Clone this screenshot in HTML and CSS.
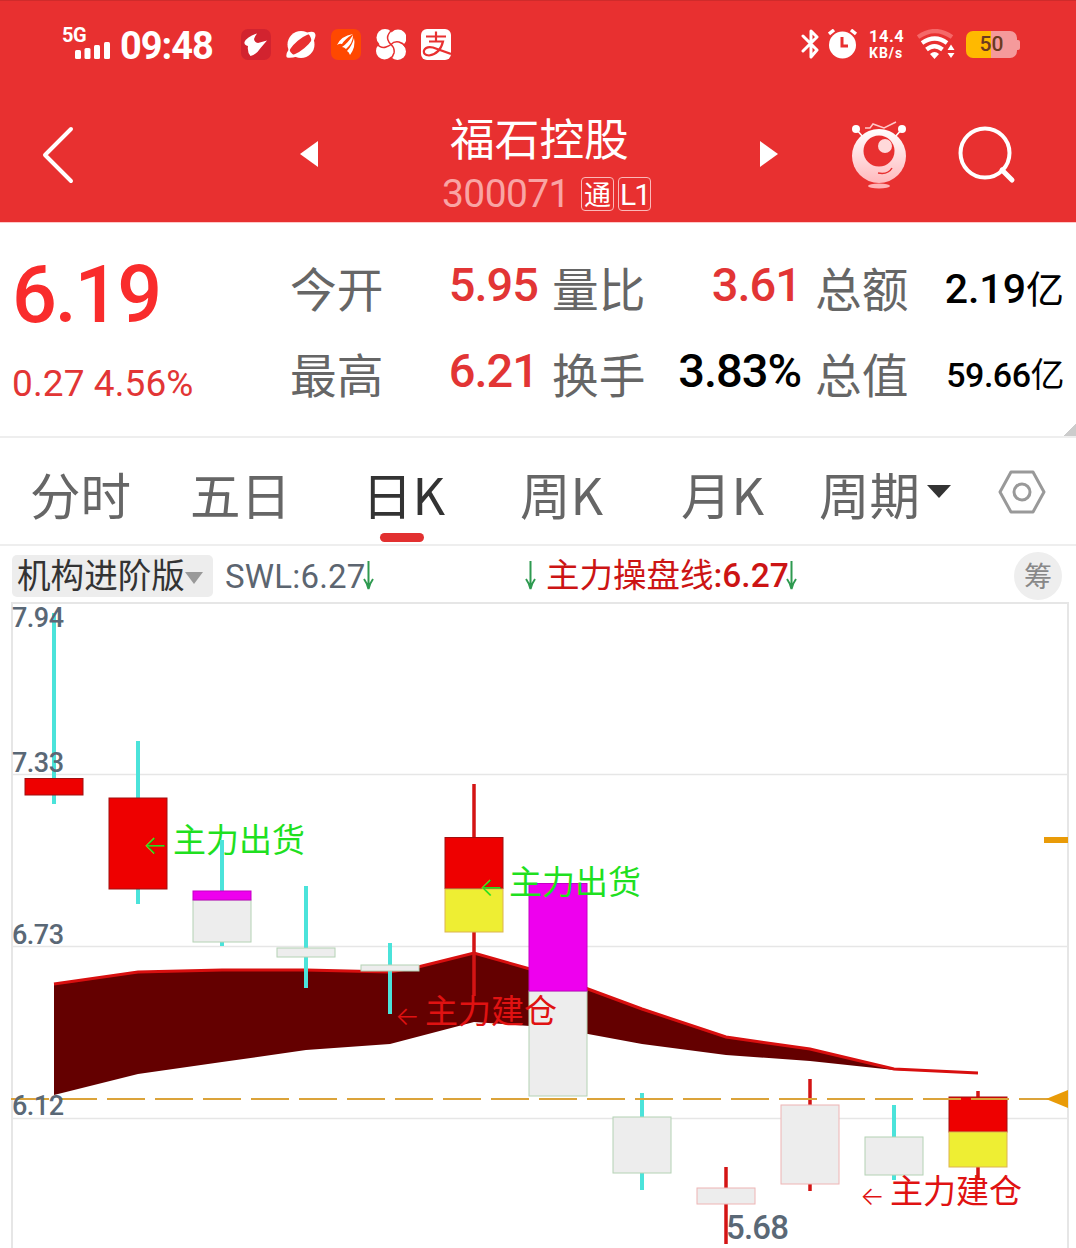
FILE: index.html
```html
<!DOCTYPE html>
<html lang="zh-CN">
<head>
    <meta charset="UTF-8">
    <meta name="viewport" content="width=device-width, initial-scale=1.0">
    <title>福石控股 300071</title>
    <link rel="stylesheet" href="styles.css">
</head>
<body>
    <header class="header">
        <div class="status-bar">
            <div class="status-left">
                <div class="signal">
                    <span class="network">5G</span>
                    <svg class="bars" width="36" height="17" viewBox="0 0 36 17" fill="#fff">
                        <rect x="0" y="8" width="6" height="9" rx="1.5"/>
                        <rect x="9.5" y="6" width="6" height="11" rx="1.5"/>
                        <rect x="19" y="3" width="6" height="14" rx="1.5"/>
                        <rect x="29" y="0" width="6" height="17" rx="1.5"/>
                    </svg>
                </div>
                <span class="time">09:48</span>
                <div class="app-icons">
                    <svg width="30" height="31" viewBox="0 0 30 31">
                        <rect width="30" height="31" rx="7" fill="#d2232f"/>
                        <path d="M16 4.500Q6 8 3.500 13Q3 16 7 17Q6 23 9.500 27Q15 26 20 18.500L26 11.500L17 14Q13 13 13 10Q14 7 16 4.500Z" fill="#fff"/>
                    </svg>
                    <svg width="30" height="31" viewBox="0 0 30 31">
                        <circle cx="15" cy="15.500" r="13.500" fill="#fff"/>
                        <ellipse cx="15" cy="15.500" rx="15" ry="5" transform="rotate(-40 15 15.500)" fill="#e83030"/>
                        <path d="M21 3.500Q29 1 29.500 6Q29.500 10 25 16Q27 9 21 3.500ZM3 20Q-1 26 1 28.500Q5 29.500 11 27.500Q5 25.500 3 20Z" fill="#fff"/>
                    </svg>
                    <svg width="30" height="31" viewBox="0 0 30 31">
                        <rect width="30" height="31" rx="7" fill="#ff4800"/>
                        <g fill="#fff">
                            <path d="M6 16Q10 7 22 5Q14 10 11 15Q9 14 6 16Z"/>
                            <path d="M11 18Q17 14 22 6Q22 14 15 20Q13 18 11 18Z"/>
                            <path d="M16 22Q21 17 23 9Q25 18 19 26Q18 23 16 22Z"/>
                        </g>
                    </svg>
                    <svg width="30" height="31" viewBox="0 0 30 31">
                        <g fill="#fff">
                            <circle cx="9" cy="8.500" r="8.500"/>
                            <circle cx="22" cy="9" r="8.500"/>
                            <circle cx="8.500" cy="22" r="8.500"/>
                            <circle cx="21.500" cy="22.500" r="8.500"/>
                            <rect x="10" y="10" width="10" height="11"/>
                        </g>
                        <path d="M17 0Q10 6 12 11Q13 14 15 15.500Q19 19 18 24Q17 28 13 31M0 14Q5 20 10 18Q13 17 15 15.500Q18 12 23 13Q27 14 30 18" fill="none" stroke="#e83030" stroke-width="1.5"/>
                    </svg>
                    <svg width="30" height="31" viewBox="0 0 30 31">
                        <rect width="30" height="31" rx="6" fill="#fff"/>
                        <path d="M5 7.500H25M15 2.500V12M8 12.500H22Q19 25 8 26.500Q2 26 3 21.500Q5 17 12 18.500L30 25" fill="none" stroke="#e83030" stroke-width="2.200"/>
                    </svg>
                </div>
            </div>
            <div class="status-right">
                <svg width="20" height="31" viewBox="0 0 20 31" fill="none" stroke="#fff" stroke-width="3" stroke-linejoin="round" stroke-linecap="round">
                    <path d="M2 7L16 21L10 28V2L16 8L2 22"/>
                </svg>
                <svg class="alarm" width="31" height="31" viewBox="0 0 31 31">
                    <circle cx="14.500" cy="16" r="13.500" fill="#fff"/>
                    <path d="M1 5L6 1M23 1L28 5" stroke="#fff" stroke-width="3.500"/>
                    <path d="M14 8V17H20" fill="none" stroke="#e83030" stroke-width="3"/>
                </svg>
                <div class="net-speed"><span>14.4</span><span>KB/s</span></div>
                <svg class="wifi" width="39" height="31" viewBox="0 0 39 31">
                    <g fill="none" stroke="#fff" stroke-width="4.200">
                        <path d="M1 8Q18 -4 35 8" stroke="#f56868"/>
                        <path d="M5 14Q18 5 30 14"/>
                        <path d="M9.500 20.500Q17.500 14 25.500 20.500"/>
                    </g>
                    <path d="M13 25Q17.500 21 22 25L17.500 30Z" fill="#fff"/>
                    <path d="M30.500 21L34 15.500L37.500 21ZM30.500 24H37.500L34 29Z" fill="#fff"/>
                </svg>
                <div class="battery"><span>50</span></div>
            </div>
        </div>
        <div class="nav-bar">
            <svg class="back" width="32" height="58" viewBox="0 0 32 58" fill="none" stroke="#fff" stroke-width="4" stroke-linecap="round" stroke-linejoin="round">
                <path d="M29 3L3 29L29 55"/>
            </svg>
            <svg class="prev" width="19" height="28" viewBox="0 0 19 28"><path d="M0 14L18 1V27Z" fill="#fff"/></svg>
            <div class="stock-title">
                <h1>福石控股</h1>
                <div class="stock-code">
                    <span class="code">300071</span>
                    <span class="badge">通</span>
                    <span class="badge badge-l1">L1</span>
                </div>
            </div>
            <svg class="next" width="19" height="28" viewBox="0 0 19 28"><path d="M0 1L18 14L0 27Z" fill="#fff"/></svg>
            <svg class="robot" width="56" height="70" viewBox="0 0 56 70">
                <defs>
                    <linearGradient id="face" x1="0" y1="0" x2="0" y2="1">
                        <stop offset="0" stop-color="#fff"/>
                        <stop offset="1" stop-color="#ffb9bd"/>
                    </linearGradient>
                </defs>
                <path d="M5 8L12 16M51 8L44 16" stroke="#fff" stroke-width="1.500"/>
                <path d="M14 7H19L22 3L33 7L45 1" fill="none" stroke="#ffc8c8" stroke-width="1.500"/>
                <circle cx="5" cy="8" r="4" fill="#fff"/>
                <circle cx="51" cy="8" r="4" fill="#fff"/>
                <circle cx="28" cy="35" r="27" fill="url(#face)"/>
                <circle cx="28" cy="30" r="15.500" fill="#e83030"/>
                <circle cx="34" cy="25" r="7" fill="#ffd9da"/>
                <path d="M27 52Q37 54 41 47" fill="none" stroke="#e83030" stroke-width="1.500"/>
                <ellipse cx="28" cy="65" rx="11" ry="2.500" fill="#ffb3b6"/>
            </svg>
            <svg class="search" width="58" height="60" viewBox="0 0 58 60" fill="none" stroke="#fff" stroke-width="4" stroke-linecap="round">
                <circle cx="27" cy="27" r="24.500"/>
                <path d="M44 44L54 54" stroke-width="5"/>
            </svg>
        </div>
    </header>

    <section class="quote">
        <div class="quote-price">
            <div class="price">6.19</div>
            <div class="change">0.27 4.56%</div>
        </div>
        <div class="quote-grid">
            <span class="label first">今开</span>
            <span class="value up">5.95</span>
            <span class="label">量比</span>
            <span class="value up">3.61</span>
            <span class="label">总额</span>
            <span class="value amount">2.19<b>亿</b></span>
            <span class="label first">最高</span>
            <span class="value up">6.21</span>
            <span class="label">换手</span>
            <span class="value percent">3.83%</span>
            <span class="label">总值</span>
            <span class="value cap">59.66<b>亿</b></span>
        </div>
    </section>

    <nav class="tabs">
        <span class="tab">分时</span>
        <span class="tab">五日</span>
        <span class="tab active">日K</span>
        <span class="tab">周K</span>
        <span class="tab">月K</span>
        <span class="tab period">周期</span>
        <svg class="caret" width="24" height="13" viewBox="0 0 24 13"><path d="M0 0H24L12 13Z" fill="#333"/></svg>
        <svg class="settings" width="48" height="44" viewBox="0 0 48 44" fill="none" stroke="#999" stroke-width="3" stroke-linejoin="round">
            <path d="M13 2H35L46 22L35 42H13L2 22Z"/>
            <circle cx="24" cy="22" r="8"/>
        </svg>
    </nav>

    <div class="indicator">
        <div class="indicator-name">
            <span>机构进阶版</span>
            <svg width="18" height="12" viewBox="0 0 18 12"><path d="M0 0H18L9 12Z" fill="#999"/></svg>
        </div>
        <span class="swl">SWL:6.27</span>
        <svg class="down" width="11" height="30" viewBox="0 0 11 30"><path d="M5.500 0V28M1 18Q4 22 5.500 28Q7 22 10 18"/></svg>
        <svg class="down down-main" width="11" height="30" viewBox="0 0 11 30"><path d="M5.500 0V28M1 18Q4 22 5.500 28Q7 22 10 18"/></svg>
        <span class="main-line">主力操盘线<b>:6.27</b></span>
        <svg class="down" width="11" height="30" viewBox="0 0 11 30"><path d="M5.500 0V28M1 18Q4 22 5.500 28Q7 22 10 18"/></svg>
        <span class="chip">筹</span>
    </div>

    <svg class="chart" width="1076" height="646" viewBox="0 602 1076 646">
        <!-- grid -->
        <g class="grid">
            <path d="M12 1248V603H1068V1248" stroke-width="2"/>
            <path d="M12 774.500H1068M12 946.500H1068M12 1118.500H1068"/>
        </g>

        <g class="signal-sell">
            <text x="173" y="852" textLength="132">主力出货</text>
        </g>

        <!-- band -->
        <path class="band" d="M54 984L138 972L222 970L306 970L390 972L418 967L474 953L530 969L588 989L642 1009L726 1037L810 1049L894 1069L978 1073L894 1070L810 1061L726 1055L642 1044L588 1034L530 1026L474 1022L390 1044L306 1050L222 1062L138 1074L54 1095Z"/>
        <path class="band-line" d="M54 984L138 972L222 970L306 970L390 972L418 967L474 953L530 969L588 989L642 1009L726 1037L810 1049L894 1069L978 1073"/>

        <!-- wicks -->
        <g class="wick-down">
            <path d="M54 613V804M138 741V904M222 840V946M306 886V988M390 943V1014M642 1093V1190M894 1105V1180"/>
        </g>
        <g class="wick-up">
            <path d="M474 784V996M726 1167V1244M810 1079V1191M978 1091V1180"/>
        </g>

        <!-- candles -->
        <g class="flat flat-down">
            <rect x="193" y="900" width="58" height="42"/>
            <rect x="277" y="948" width="58" height="9"/>
            <rect x="361" y="965" width="58" height="6"/>
            <rect x="529" y="991" width="58" height="105"/>
            <rect x="613" y="1117" width="58" height="56"/>
            <rect x="865" y="1137" width="58" height="38"/>
        </g>
        <g class="flat flat-up">
            <rect x="697" y="1188" width="58" height="16"/>
            <rect x="781" y="1105" width="58" height="79"/>
        </g>
        <g class="red">
            <rect x="25" y="778.500" width="58" height="16.500"/>
            <rect x="109" y="798" width="58" height="91"/>
            <rect x="445" y="837.500" width="58" height="51"/>
            <rect x="949" y="1097" width="58" height="35"/>
        </g>
        <g class="yellow">
            <rect x="445" y="889" width="58" height="43"/>
            <rect x="949" y="1132" width="58" height="35"/>
        </g>
        <g class="magenta">
            <rect x="193" y="891" width="58" height="9"/>
            <rect x="529" y="883.500" width="58" height="107.500"/>
        </g>

        <!-- last price -->
        <path class="last-price" d="M11 1099H1050"/>
        <path d="M1046 1099L1068 1090V1108Z" fill="#e99b08"/>
        <rect x="1044" y="837" width="24" height="6" fill="#e99b08"/>

        <g class="signal-sell">
            <text class="arrow" x="143" y="854">←</text>
            <text class="arrow" x="479" y="896">←</text>
            <text x="509" y="894" textLength="132">主力出货</text>
        </g>
        <g class="signal-buy">
            <text class="arrow" x="395" y="1025">←</text>
            <text x="425" y="1023" textLength="132">主力建仓</text>
            <text class="arrow" x="860" y="1205">←</text>
            <text x="890" y="1203" textLength="132">主力建仓</text>
        </g>

        <g class="axis">
            <text x="12" y="627" textLength="52">7.94</text>
            <text x="12" y="772" textLength="52">7.33</text>
            <text x="12" y="944" textLength="52">6.73</text>
            <text x="12" y="1115" textLength="52">6.12</text>
            <text class="low" x="726" y="1239" textLength="63">5.68</text>
        </g>
    </svg>
</body>
</html>
```

FILE: styles.css
```css
* {
    margin: 0;
    padding: 0;
    box-sizing: border-box;
}

body {
    width: 1076px;
    height: 1248px;
    overflow: hidden;
    background: #fff;
    font-family: 'Roboto', 'Noto Sans CJK SC', sans-serif;
    white-space: nowrap;
}

svg {
    display: block;
    flex-shrink: 0;
}

.header {
    height: 222px;
    background: #e83030;
    border-top: 1px solid #cf2b2b;
    color: #fff;
}

.status-bar {
    display: flex;
    justify-content: space-between;
    height: 87px;
    padding: 0 56px 0 62px;
}

.status-left,
.status-right {
    display: flex;
    align-items: center;
}

.signal {
    width: 49px;
    height: 33px;
    margin-right: 9px;
}

.network {
    display: block;
    height: 17px;
    font-size: 20px;
    font-weight: 700;
    line-height: 15px;
    letter-spacing: -0.5px;
}

.bars {
    margin-left: 13px;
    margin-top: -3px;
}

.time {
    width: 121px;
    font-size: 38px;
    font-weight: 700;
    letter-spacing: -1px;
    line-height: 44px;
    margin-top: 2px;
}

.app-icons {
    display: flex;
    gap: 15px;
}

.alarm {
    margin-left: 7px;
    margin-right: 10px;
}

.net-speed {
    display: flex;
    flex-direction: column;
    width: 36px;
    font-size: 16.5px;
    font-weight: 700;
}

.net-speed span:first-child {
    height: 17px;
    line-height: 15px;
    letter-spacing: 0.5px;
}

.net-speed span:last-child {
    height: 15px;
    font-size: 14px;
    line-height: 14px;
    letter-spacing: 1px;
}

.wifi {
    margin-left: 12px;
}

.battery {
    position: relative;
    width: 51px;
    height: 27px;
    margin-left: 10px;
    margin-right: 3px;
    border-radius: 7px;
    background: linear-gradient(90deg, #ffb900 50%, #f59a9b 50%);
    color: #6b3a20;
    font-size: 21px;
    font-weight: 500;
    line-height: 27px;
    text-align: center;
}

.battery::after {
    content: '';
    position: absolute;
    right: -3px;
    top: 9px;
    width: 3px;
    height: 10px;
    border-radius: 0 2px 2px 0;
    background: #f59a9b;
}

.nav-bar {
    display: flex;
    height: 134px;
    padding-left: 42px;
}

.back {
    margin-top: 38px;
}

.prev {
    margin-top: 52px;
    margin-left: 226px;
}

.stock-title {
    width: 210px;
    margin: 24px 0 0 123px;
}

h1 {
    height: 56px;
    padding-left: 8px;
    font-size: 44.7px;
    font-weight: 400;
    line-height: 58px;
}

.stock-code {
    display: flex;
    align-items: center;
    height: 52px;
}

.code {
    width: 139px;
    color: #f9a4a4;
    font-size: 39px;
    letter-spacing: -0.6px;
    line-height: 54px;
}

.badge {
    width: 33px;
    height: 34px;
    margin-right: 4px;
    border: 1.5px solid #fbb9b9;
    border-radius: 4px;
    font-size: 27px;
    line-height: 36px;
    text-align: center;
}

.badge-l1 {
    font-size: 30px;
    letter-spacing: -2px;
    line-height: 33px;
    margin-right: 0;
}

.next {
    margin-top: 52px;
    margin-left: 108px;
}

.robot {
    margin-top: 33px;
    margin-left: 72px;
}

.search {
    margin-top: 38px;
    margin-left: 51px;
}

.quote {
    display: flex;
    height: 216px;
    border-top: 1px solid #ffc9c9;
    border-bottom: 2px solid #eee;
    background: linear-gradient(135deg, transparent 50%, #ccc 50%) right bottom / 12px 12px no-repeat;
}

.quote-price {
    width: 290px;
    padding: 26px 0 0 12px;
    color: #e23535;
}

.price {
    height: 88px;
    color: #f92c2c;
    font-size: 79px;
    font-weight: 500;
    line-height: 93px;
    letter-spacing: -2.2px;
}

.change {
    height: 44px;
    margin-top: 23px;
    font-size: 37px;
    line-height: 48px;
    letter-spacing: 0.1px;
}

.quote-grid {
    display: grid;
    grid-template-columns: 93px 155px 108px 155px 109px 154px;
    grid-template-rows: 86px 86px;
    padding-top: 22px;
}

.label {
    padding-left: 14px;
    color: #666;
    font-size: 46.7px;
    line-height: 93px;
}

.label.first {
    padding-left: 0;
}

.value {
    color: #000;
    font-size: 47px;
    font-weight: 500;
    line-height: 80px;
    letter-spacing: -1px;
    text-align: right;
}

.value.up {
    color: #e23535;
}

.value b {
    font-weight: 400;
}

.value.amount {
    font-size: 41px;
    line-height: 88px;
    letter-spacing: 0;
}

.amount b {
    font-size: 38px;
}

.value.cap {
    font-size: 34px;
    line-height: 89px;
    letter-spacing: -0.5px;
}

.tabs {
    display: flex;
    height: 108px;
    padding-left: 30px;
    border-bottom: 2px solid #eee;
    color: #666;
    font-family: 'Noto Sans CJK SC', sans-serif;
    font-size: 50.5px;
    line-height: 111px;
}

.tab {
    width: 160px;
}

.tab.active {
    position: relative;
    width: 170px;
    padding-left: 12px;
    color: #333;
}

.tab.active::after {
    content: '';
    position: absolute;
    left: 30px;
    top: 95px;
    width: 44px;
    height: 9px;
    border-radius: 5px;
    background: #e23030;
}

.tab.active + .tab {
    width: 161px;
}

.tab.active + .tab + .tab {
    width: 138px;
}

.tab.period {
    width: 108px;
}

.caret {
    margin-top: 47px;
}

.settings {
    margin: 32px 0 0 47px;
}

.indicator {
    display: flex;
    align-items: center;
    height: 56px;
    padding: 4px 14px 0 12px;
    font-size: 33px;
}

.indicator-name {
    display: flex;
    align-items: center;
    width: 201px;
    height: 42px;
    padding-left: 5px;
    border-radius: 5px;
    background: #ededed;
    color: #333;
    font-size: 33.6px;
}

.indicator-name span {
    height: 42px;
    line-height: 44px;
}

.indicator-name svg {
    margin-top: 4px;
}

.swl {
    width: 138px;
    margin-left: 12px;
    color: #5c6570;
    letter-spacing: 0.2px;
}

.down {
    fill: none;
    stroke: #2e9a50;
    stroke-width: 2;
}

.down-main {
    margin-left: 151px;
}

.main-line {
    width: 240px;
    height: 42px;
    margin-left: 10px;
    color: #cc1414;
    font-size: 33.5px;
    line-height: 42px;
}

.main-line b {
    font-weight: 500;
}

.chip {
    width: 48px;
    height: 48px;
    margin-left: auto;
    border-radius: 50%;
    background: #eee;
    color: #888;
    font-size: 28px;
    line-height: 52px;
    text-align: center;
}

.grid {
    fill: none;
    stroke: #e6e6e6;
    stroke-width: 1.5;
}

.band {
    fill: #640000;
}

.band-line {
    fill: none;
    stroke: #d80f0f;
    stroke-width: 3;
}

.wick-down {
    stroke: #4be3da;
    stroke-width: 4;
}

.wick-up {
    stroke: #d41414;
    stroke-width: 3.5;
}

.flat {
    fill: #ededed;
    stroke-width: 1;
}

.flat-down {
    stroke: #b4d2b4;
}

.flat-up {
    stroke: #eeb4b4;
}

.red {
    fill: #ee0000;
    stroke: #a01010;
}

.yellow {
    fill: #eeee33;
    stroke: #dcb450;
}

.magenta {
    fill: #ee00ee;
    stroke: #c400c4;
}

.last-price {
    stroke: #dba33a;
    stroke-width: 2;
    stroke-dasharray: 38 10;
}

.signal-sell,
.signal-buy {
    font-family: 'Noto Sans CJK SC', sans-serif;
    font-size: 33px;
}

.signal-sell {
    fill: #1fe01f;
}

.signal-buy {
    fill: #e01212;
}

.arrow {
    font-family: 'Inter', 'Liberation Sans', sans-serif;
    font-size: 26px;
    font-weight: 300;
}

.axis {
    fill: #5a6876;
    font-size: 27px;
    font-weight: 500;
}

.low {
    font-size: 33px;
}
```
